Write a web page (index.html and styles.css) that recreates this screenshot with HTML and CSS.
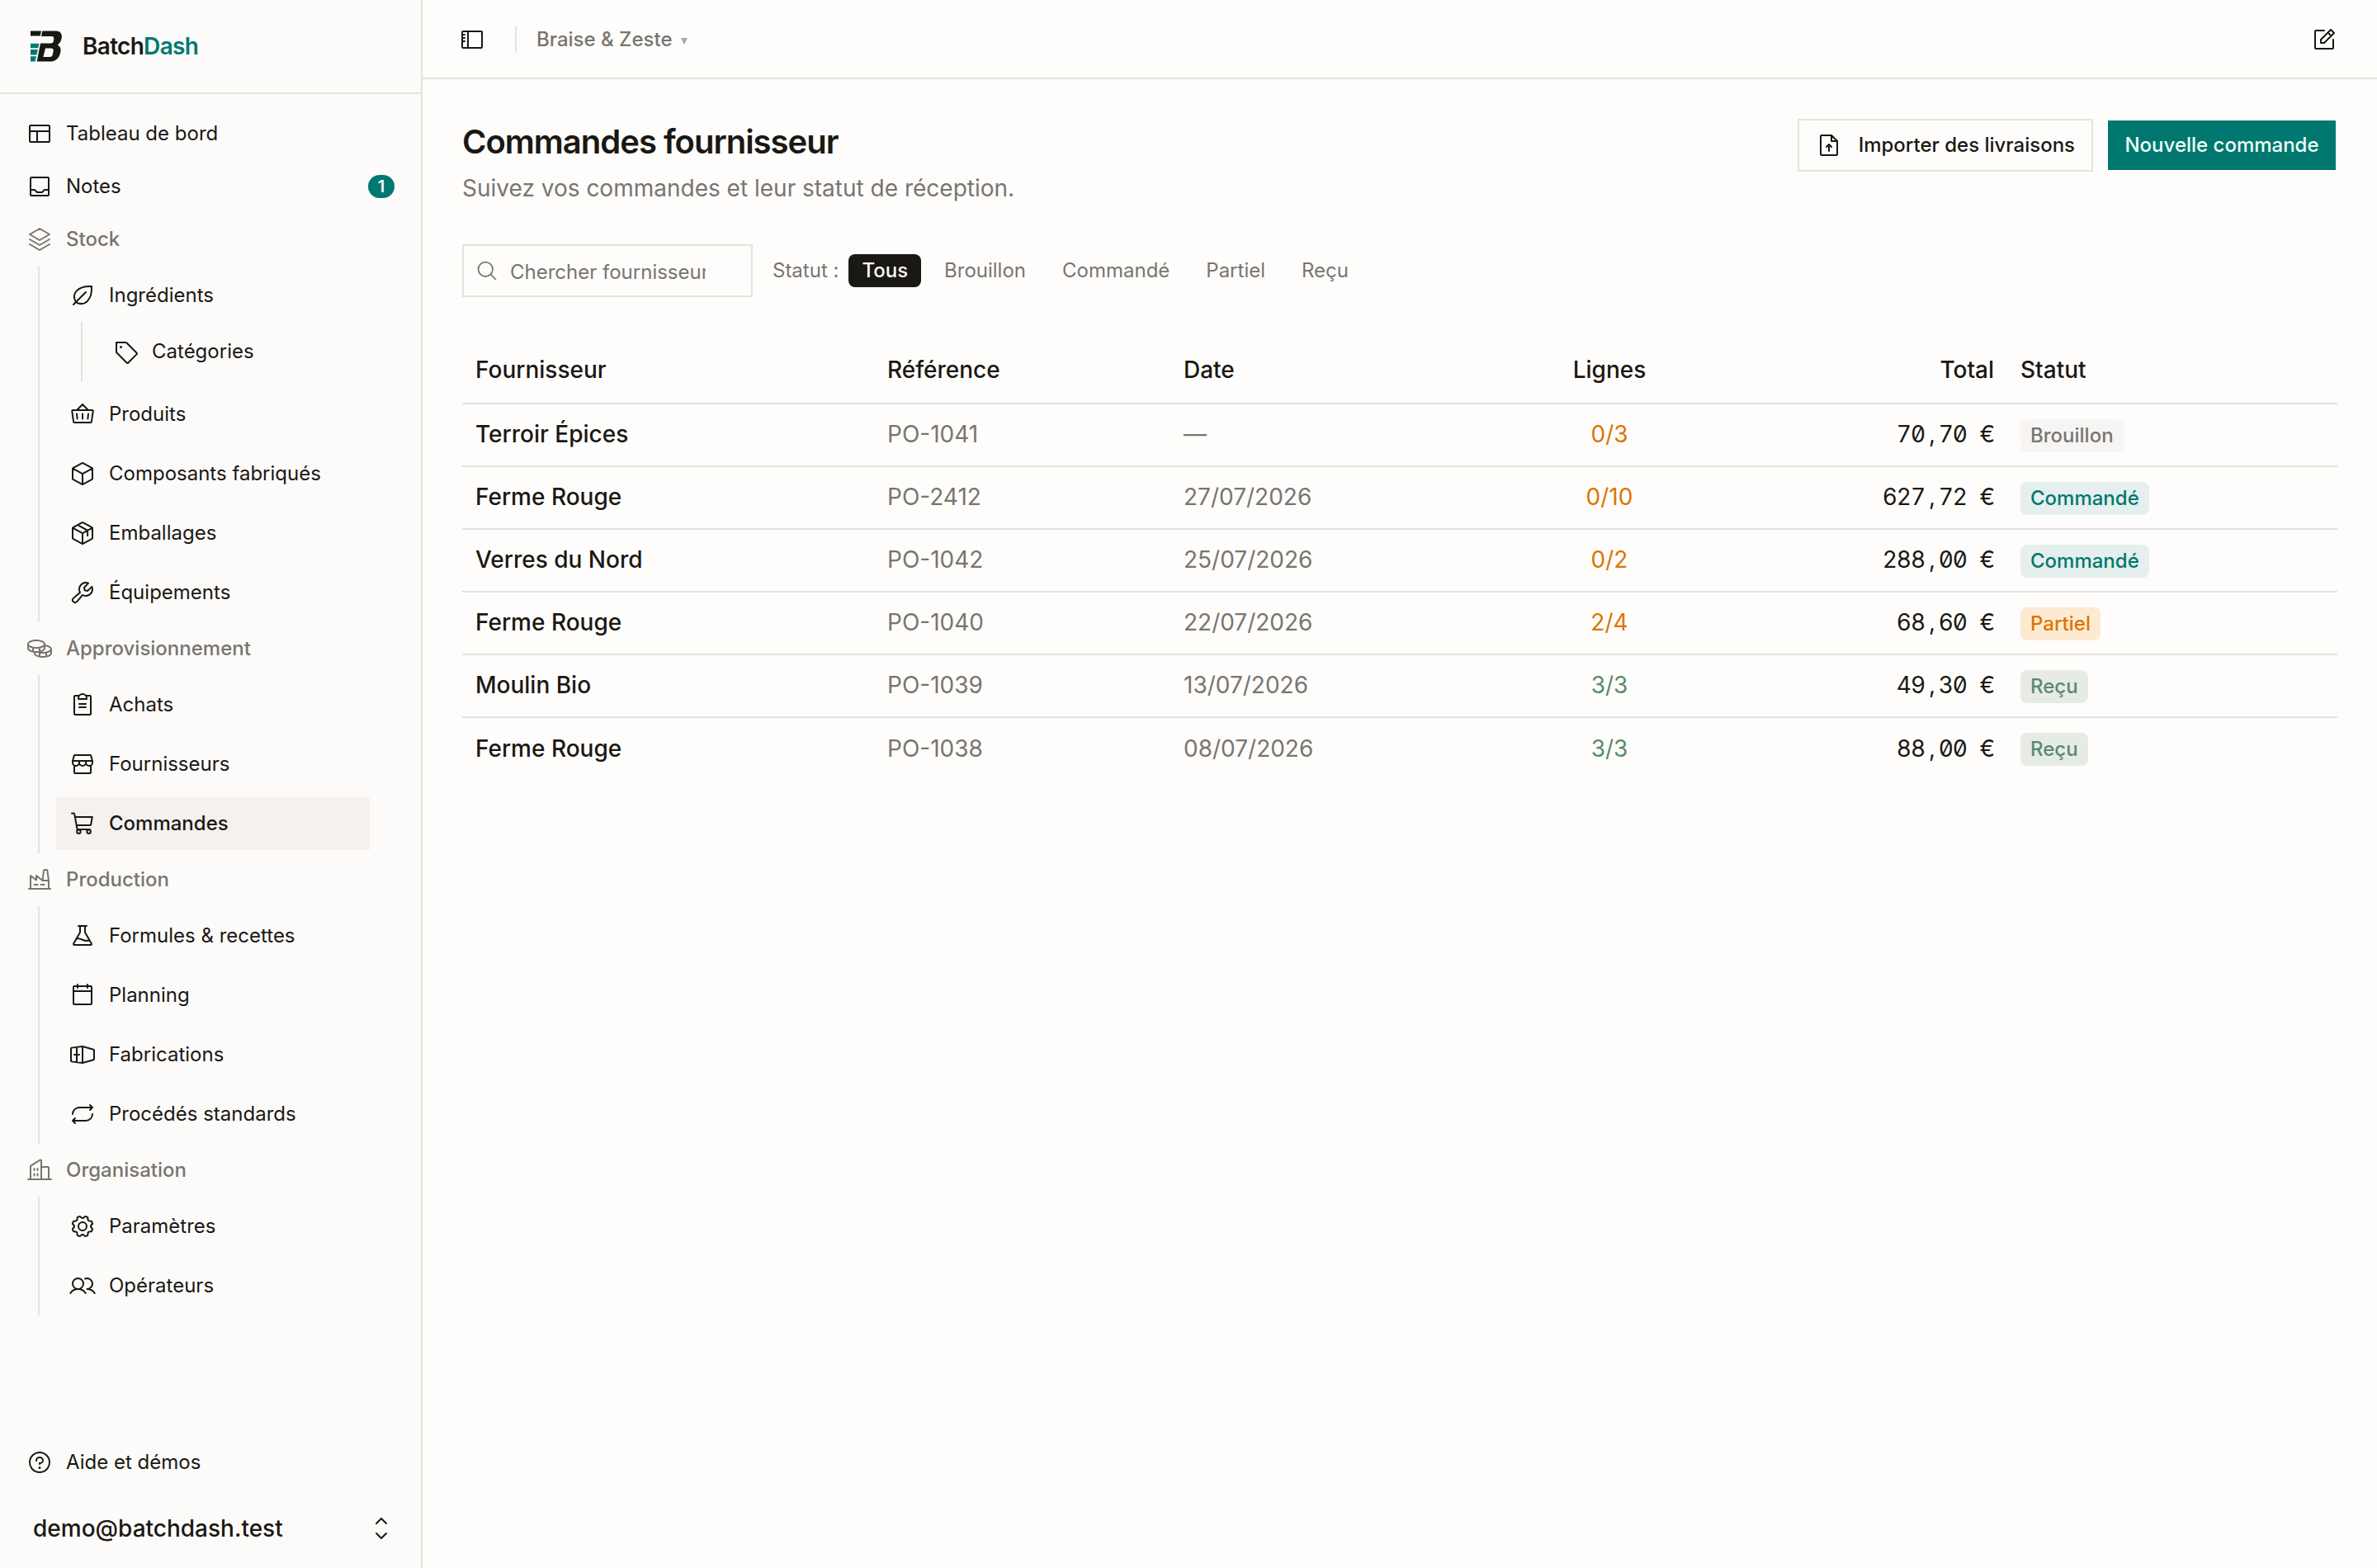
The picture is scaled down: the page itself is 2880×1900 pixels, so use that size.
FILE: index.html
```html
<!DOCTYPE html>
<html lang="fr">
<head>
    <meta charset="utf-8">
    <title>Commandes fournisseur - BatchDash</title>
    <link rel="stylesheet" href="styles.css">
</head>
<body>
    <aside class="sidebar">
        <div class="brand">
            <svg class="logo" viewBox="0 0 38 38">
                <path d="M0 .5h13l-1.3 6H0z"/>
                <path fill-rule="evenodd" d="M14.3.4H31c5 0 7.4 3.6 6.8 8-.5 4.1-2.3 7.1-5.1 9 3.3 1.6 4.3 4.6 3.6 8.6C35.2 33 30.5 37.6 24 37.6H7.7L12 15.6h12.5c2 0 3.2-1 3.5-3l.2-2.5c.2-2-.7-3.1-2.6-3.1H13zM18 21.5L15.4 32h8c2 0 3-1 3.4-3l.8-4c.4-2-.4-3.5-2.4-3.5z"/>
                <path class="logo-accent" d="M0 15.700h10.400l-1.200 5.600H0zM0 23h8.800l-1.300 6.400H0zM0 31.200h7l-1.400 6.400H0z"/>
            </svg>
            <span class="brand-name">Batch<span>Dash</span></span>
        </div>

        <nav class="nav">
            <a class="nav-item">
                <svg class="icon" viewBox="0 0 256 256"><rect x="32" y="48" width="192" height="160" rx="8"/><path d="M104 104v104M32 104h192"/></svg>
                Tableau de bord
            </a>
            <a class="nav-item">
                <svg class="icon" viewBox="0 0 256 256"><rect x="40" y="40" width="176" height="176" rx="8"/><path d="M40 160h36.700a8 8 0 0 1 5.600 2.300l19.400 19.400a8 8 0 0 0 5.600 2.300h41.400a8 8 0 0 0 5.600-2.300l19.400-19.400a8 8 0 0 1 5.600-2.300H216"/></svg>
                Notes
                <span class="count">1</span>
            </a>

            <div class="nav-section">
                <svg class="icon" viewBox="0 0 256 256"><path d="M32 176l96 56 96-56M32 128l96 56 96-56M32 80l96 56 96-56-96-56z"/></svg>
                Stock
            </div>
            <ul class="tree">
                <li>
                    <a class="nav-item">
                        <svg class="icon" viewBox="0 0 256 256"><path d="M63.810 192.190c-47.890-79.810 16-159.620 151.640-151.640C223.430 176.230 143.620 240.080 63.810 192.190zM160 96L40 216"/></svg>
                        Ingrédients
                    </a>
                    <ul class="tree">
                        <li>
                            <a class="nav-item">
                                <svg class="icon" viewBox="0 0 256 256"><path d="M42.340 138.340A8 8 0 0 1 40 132.690V40h92.690a8 8 0 0 1 5.650 2.340l99.320 99.320a8 8 0 0 1 0 11.310L153 237.660a8 8 0 0 1-11.310 0z"/><circle class="dot" cx="84" cy="84" r="12"/></svg>
                                Catégories
                            </a>
                        </li>
                    </ul>
                </li>
                <li>
                    <a class="nav-item">
                        <svg class="icon" viewBox="0 0 256 256"><path d="M34.100 88h187.800a8 8 0 0 1 7.900 9.100l-14.500 104a8 8 0 0 1-7.900 6.900H48.600a8 8 0 0 1-7.900-6.900l-14.500-104A8 8 0 0 1 34.100 88zM73.100 88L128 32l54.900 56M128 124v48M184 124l-5 48M72 124l5 48"/></svg>
                        Produits
                    </a>
                </li>
                <li>
                    <a class="nav-item">
                        <svg class="icon" viewBox="0 0 256 256"><path d="M219.840 182.840l-88 48.180a8 8 0 0 1-7.680 0l-88-48.180a8 8 0 0 1-4.160-7V80.180a8 8 0 0 1 4.160-7l88-48.180a8 8 0 0 1 7.680 0l88 48.180a8 8 0 0 1 4.160 7v95.640a8 8 0 0 1-4.160 7.020zM32.700 76.920L128 129.080l95.300-52.160M128 129.080V232"/></svg>
                        Composants fabriqués
                    </a>
                </li>
                <li>
                    <a class="nav-item">
                        <svg class="icon" viewBox="0 0 256 256"><path d="M219.840 182.840l-88 48.180a8 8 0 0 1-7.680 0l-88-48.180a8 8 0 0 1-4.160-7V80.180a8 8 0 0 1 4.160-7l88-48.180a8 8 0 0 1 7.680 0l88 48.180a8 8 0 0 1 4.160 7v95.640a8 8 0 0 1-4.160 7.020zM32.700 76.920L128 129.080l95.300-52.160M128 129.080V232M177 152v-50L81 49.600"/></svg>
                        Emballages
                    </a>
                </li>
                <li>
                    <a class="nav-item">
                        <svg class="icon solid" viewBox="0 0 256 256"><path d="M226.760,69a8,8,0,0,0-12.840-2.880l-40.300,37.190-17.230-3.700-3.700-17.230,37.190-40.300A8,8,0,0,0,187,29.240,72,72,0,0,0,88,96,72.340,72.340,0,0,0,94,124.940L33.790,177c-.15.12-.29.26-.43.39a32,32,0,0,0,45.260,45.260c.13-.13.27-.28.39-.42L131.060,162A72,72,0,0,0,232,96,71.560,71.560,0,0,0,226.760,69ZM160,152a56.140,56.140,0,0,1-27.070-7,8,8,0,0,0-9.920,1.770L67.110,211.510a16,16,0,0,1-22.620-22.620L109.180,133a8,8,0,0,0,1.770-9.930,56,56,0,0,1,58.360-82.310l-31.200,33.810a8,8,0,0,0-1.940,7.100L141.830,108a8,8,0,0,0,6.140,6.140l26.350,5.660a8,8,0,0,0,7.100-1.940l33.810-31.200A56.060,56.060,0,0,1,160,152Z"/></svg>
                        Équipements
                    </a>
                </li>
            </ul>

            <div class="nav-section">
                <svg class="icon solid" viewBox="0 0 256 256"><path d="M184,89.570V84c0-25.080-37.830-44-88-44S8,58.920,8,84v40c0,20.890,26.250,37.490,64,42.460V172c0,25.080,37.830,44,88,44s88-18.920,88-44V132C248,111.300,222.580,94.680,184,89.570ZM232,132c0,13.220-30.790,28-72,28-3.730,0-7.430-.13-11.080-.37C170.490,151.770,184,139,184,124V105.740C213.870,110.190,232,122.270,232,132ZM72,150.250V126.460A183.740,183.740,0,0,0,96,128a183.740,183.740,0,0,0,24-1.540v23.790A163,163,0,0,1,96,152,163,163,0,0,1,72,150.250Zm96-40.320V124c0,8.390-12.410,17.400-32,22.870V123.500C148.910,120.370,159.840,115.710,168,109.930ZM96,56c41.210,0,72,14.780,72,28s-30.790,28-72,28S24,97.220,24,84,54.790,56,96,56ZM24,124V109.930c8.160,5.780,19.090,10.440,32,13.570v23.370C36.410,141.400,24,132.390,24,124Zm64,48v-4.170c2.630.1,5.290.17,8,.17,3.880,0,7.670-.13,11.390-.35A121.920,121.920,0,0,0,120,171.410v23.460C100.410,189.400,88,180.390,88,172Zm48,26.250V174.400a179.480,179.480,0,0,0,24,1.600,183.740,183.740,0,0,0,24-1.540v23.790a165.450,165.450,0,0,1-48,0Zm64-3.380V171.500c12.910-3.130,23.840-7.790,32-13.570V172C232,180.390,219.590,189.400,200,194.870Z"/></svg>
                Approvisionnement
            </div>
            <ul class="tree">
                <li>
                    <a class="nav-item">
                        <svg class="icon" viewBox="0 0 256 256"><path d="M96 152h64M96 120h64M160 40h40a8 8 0 0 1 8 8v168a8 8 0 0 1-8 8H56a8 8 0 0 1-8-8V48a8 8 0 0 1 8-8h40M88 72v-8a40 40 0 0 1 80 0v8z"/></svg>
                        Achats
                    </a>
                </li>
                <li>
                    <a class="nav-item">
                        <svg class="icon" viewBox="0 0 256 256"><path d="M48 139.600V208a8 8 0 0 0 8 8h144a8 8 0 0 0 8-8v-68.400M54 40h148a8 8 0 0 1 7.700 5.800L224 96H32l14.300-50.200A8 8 0 0 1 54 40zM96 96v16a32 32 0 0 1-64 0V96M160 96v16a32 32 0 0 1-64 0V96M224 96v16a32 32 0 0 1-64 0V96"/></svg>
                        Fournisseurs
                    </a>
                </li>
                <li>
                    <a class="nav-item active">
                        <svg class="icon" viewBox="0 0 256 256"><circle cx="91" cy="206" r="18"/><circle cx="189" cy="206" r="18"/><path d="M24 28h18a8 8 0 0 1 7.900 6.800L77 184h122M56 64h166l-12.500 73.300a8 8 0 0 1-7.900 6.700H70"/></svg>
                        Commandes
                    </a>
                </li>
            </ul>

            <div class="nav-section">
                <svg class="icon" viewBox="0 0 256 256"><path d="M24 216h208M40 216V88l56 44V88l61 48h59M157 134l11-95a8 8 0 0 1 8-7h19a8 8 0 0 1 8 7l13 97v80M76 176h32M140 176h32"/></svg>
                Production
            </div>
            <ul class="tree">
                <li>
                    <a class="nav-item">
                        <svg class="icon" viewBox="0 0 256 256"><path d="M88 32h80M104 32v61.800L41.200 203.900A8 8 0 0 0 48 216h160a8 8 0 0 0 6.900-12.100L152 93.800V32M68 156c18-4 38-2 60 10 22 10 42 12 62 6"/></svg>
                        Formules &amp; recettes
                    </a>
                </li>
                <li>
                    <a class="nav-item">
                        <svg class="icon" viewBox="0 0 256 256"><rect x="40" y="40" width="176" height="176" rx="8"/><path d="M176 24v32M80 24v32M40 88h176"/></svg>
                        Planning
                    </a>
                </li>
                <li>
                    <a class="nav-item">
                        <svg class="icon" viewBox="0 0 256 256"><path d="M23 61l105-13 106 30a8 8 0 0 1 6 8v84a8 8 0 0 1-6 8l-106 30-105-13a8 8 0 0 1-7-8V69a8 8 0 0 1 7-8zM128 48v160M72 55v146M48 128h48"/></svg>
                        Fabrications
                    </a>
                </li>
                <li>
                    <a class="nav-item">
                        <svg class="icon" viewBox="0 0 256 256"><path d="M32 128a64 64 0 0 1 64-64h128M200 40l24 24-24 24M224 128a64 64 0 0 1-64 64H32M56 168l-24 24 24 24"/></svg>
                        Procédés standards
                    </a>
                </li>
            </ul>

            <div class="nav-section">
                <svg class="icon" viewBox="0 0 256 256"><path d="M16 216h224M40 216V92a8 8 0 0 1 3.600-6.700l88-56A8 8 0 0 1 144 36v180M144 96h64a8 8 0 0 1 8 8v112M76 112v16M108 112v16M76 164v16M108 164v16"/></svg>
                Organisation
            </div>
            <ul class="tree">
                <li>
                    <a class="nav-item">
                        <svg class="icon solid" viewBox="0 0 256 256"><path d="M128,80a48,48,0,1,0,48,48A48.050,48.050,0,0,0,128,80Zm0,80a32,32,0,1,1,32-32A32,32,0,0,1,128,160Zm88-29.840q.06-2.160,0-4.320l14.920-18.640a8,8,0,0,0,1.480-7.060,107.210,107.210,0,0,0-10.880-26.250,8,8,0,0,0-6-3.930l-23.720-2.640q-1.480-1.560-3-3L186,40.540a8,8,0,0,0-3.940-6,107.710,107.710,0,0,0-26.250-10.870,8,8,0,0,0-7.060,1.490L130.160,40Q128,40,125.840,40L107.200,25.110a8,8,0,0,0-7.060-1.480A107.600,107.600,0,0,0,73.890,34.510a8,8,0,0,0-3.930,6L67.320,64.270q-1.560,1.490-3,3L40.540,70a8,8,0,0,0-6,3.940,107.710,107.710,0,0,0-10.870,26.250,8,8,0,0,0,1.490,7.060L40,125.840Q40,128,40,130.160L25.110,148.800a8,8,0,0,0-1.480,7.060,107.210,107.210,0,0,0,10.880,26.250,8,8,0,0,0,6,3.930l23.720,2.640q1.490,1.560,3,3L70,215.460a8,8,0,0,0,3.940,6,107.710,107.710,0,0,0,26.250,10.870,8,8,0,0,0,7.060-1.490L125.840,216q2.160.06,4.320,0l18.640,14.920a8,8,0,0,0,7.060,1.480,107.210,107.210,0,0,0,26.250-10.880,8,8,0,0,0,3.930-6l2.640-23.720q1.560-1.480,3-3L215.460,186a8,8,0,0,0,6-3.940,107.710,107.710,0,0,0,10.870-26.250,8,8,0,0,0-1.490-7.060Zm-16.100-6.500a73.930,73.930,0,0,1,0,8.680,8,8,0,0,0,1.740,5.480l14.190,17.730a91.570,91.570,0,0,1-6.230,15L187,173.110a8,8,0,0,0-5.100,2.640,74.110,74.110,0,0,1-6.140,6.140,8,8,0,0,0-2.640,5.100l-2.510,22.580a91.320,91.320,0,0,1-15,6.230l-17.740-14.190a8,8,0,0,0-5-1.750h-.48a73.930,73.930,0,0,1-8.680,0,8,8,0,0,0-5.480,1.740L100.450,215.800a91.570,91.570,0,0,1-15-6.230L82.890,187a8,8,0,0,0-2.640-5.100,74.110,74.110,0,0,1-6.140-6.140,8,8,0,0,0-5.100-2.640L46.430,170.600a91.320,91.320,0,0,1-6.230-15l14.190-17.740a8,8,0,0,0,1.740-5.480,73.930,73.930,0,0,1,0-8.680,8,8,0,0,0-1.740-5.480L40.200,100.450a91.570,91.570,0,0,1,6.230-15L69,82.890a8,8,0,0,0,5.100-2.640,74.110,74.110,0,0,1,6.140-6.140A8,8,0,0,0,82.890,69L85.400,46.430a91.320,91.320,0,0,1,15-6.230l17.740,14.190a8,8,0,0,0,5.480,1.740,73.930,73.930,0,0,1,8.680,0,8,8,0,0,0,5.480-1.740L155.550,40.200a91.570,91.570,0,0,1,15,6.230L173.110,69a8,8,0,0,0,2.640,5.100,74.110,74.110,0,0,1,6.140,6.140,8,8,0,0,0,5.100,2.640l22.580,2.510a91.320,91.320,0,0,1,6.230,15l-14.190,17.740A8,8,0,0,0,199.870,123.660Z"/></svg>
                        Paramètres
                    </a>
                </li>
                <li>
                    <a class="nav-item">
                        <svg class="icon" viewBox="0 0 256 256"><circle cx="84" cy="108" r="52"/><path d="M10.230 200a88 88 0 0 1 147.540 0M172 160a87.930 87.930 0 0 1 73.770 40M152.690 59.700A52 52 0 1 1 172 160"/></svg>
                        Opérateurs
                    </a>
                </li>
            </ul>
        </nav>

        <div class="sidebar-footer">
            <a class="nav-item">
                <svg class="icon" viewBox="0 0 256 256"><circle cx="128" cy="128" r="96"/><circle class="dot" cx="128" cy="180" r="12"/><path d="M128 144v-8c17.670 0 32-12.540 32-28s-14.330-28-32-28-32 12.540-32 28v4"/></svg>
                Aide et démos
            </a>
            <div class="account">
                <span>demo@batchdash.test</span>
                <svg class="icon" viewBox="0 0 256 256"><path d="M80 176l48 48 48-48M80 80l48-48 48 48"/></svg>
            </div>
        </div>
    </aside>

    <div class="content">
        <header class="topbar">
            <svg class="icon" viewBox="0 0 256 256"><rect x="32" y="48" width="192" height="160" rx="8"/><path d="M88 48v160M36 80h20M36 112h20M36 144h20"/></svg>
            <span class="divider"></span>
            <span class="workspace">Braise &amp; Zeste</span>
            <svg class="caret" viewBox="0 0 8 8"><path d="M0 0h8L4 8z"/></svg>
            <svg class="icon edit" viewBox="0 0 256 256"><path d="M216 128v80a8 8 0 0 1-8 8H48a8 8 0 0 1-8-8V48a8 8 0 0 1 8-8h80M128 160H96v-32l96-96 32 32zM164 60l32 32"/></svg>
        </header>

        <main>
            <div class="page-header">
                <div>
                    <h1>Commandes fournisseur</h1>
                    <p>Suivez vos commandes et leur statut de réception.</p>
                </div>
                <div class="actions">
                    <button class="btn btn-outline">
                        <svg class="icon" viewBox="0 0 256 256"><path d="M200 224H56a8 8 0 0 1-8-8V40a8 8 0 0 1 8-8h96l56 56v128a8 8 0 0 1-8 8zM152 32v56h56M104 144l24-24 24 24M128 184v-64"/></svg>
                        <span>Importer des livraisons</span>
                    </button>
                    <button class="btn btn-primary"><span>Nouvelle commande</span></button>
                </div>
            </div>

            <div class="filters">
                <div class="search">
                    <svg class="icon" viewBox="0 0 256 256"><circle cx="112" cy="112" r="80"/><path d="M168.570 168.570L224 224"/></svg>
                    <input type="text" placeholder="Chercher fournisseur ou référence">
                </div>
                <span class="filter-label">Statut :</span>
                <button class="pill selected">Tous</button>
                <button class="pill">Brouillon</button>
                <button class="pill">Commandé</button>
                <button class="pill">Partiel</button>
                <button class="pill">Reçu</button>
            </div>

            <table>
                <colgroup>
                    <col class="col-supplier">
                    <col class="col-ref">
                    <col class="col-date">
                    <col class="col-lines">
                    <col class="col-total">
                    <col class="col-status">
                </colgroup>
                <thead>
                    <tr>
                        <th>Fournisseur</th>
                        <th>Référence</th>
                        <th>Date</th>
                        <th class="lines">Lignes</th>
                        <th class="total">Total</th>
                        <th>Statut</th>
                    </tr>
                </thead>
                <tbody>
                    <tr>
                        <td class="supplier">Terroir Épices</td>
                        <td>PO-1041</td>
                        <td>—</td>
                        <td class="lines pending">0/3</td>
                        <td class="total amount">70<i>,</i>70 €</td>
                        <td class="status"><span class="badge draft">Brouillon</span></td>
                    </tr>
                    <tr>
                        <td class="supplier">Ferme Rouge</td>
                        <td>PO-2412</td>
                        <td>27/07/2026</td>
                        <td class="lines pending">0/10</td>
                        <td class="total amount">627<i>,</i>72 €</td>
                        <td class="status"><span class="badge ordered">Commandé</span></td>
                    </tr>
                    <tr>
                        <td class="supplier">Verres du Nord</td>
                        <td>PO-1042</td>
                        <td>25/07/2026</td>
                        <td class="lines pending">0/2</td>
                        <td class="total amount">288<i>,</i>00 €</td>
                        <td class="status"><span class="badge ordered">Commandé</span></td>
                    </tr>
                    <tr>
                        <td class="supplier">Ferme Rouge</td>
                        <td>PO-1040</td>
                        <td>22/07/2026</td>
                        <td class="lines pending">2/4</td>
                        <td class="total amount">68<i>,</i>60 €</td>
                        <td class="status"><span class="badge partial">Partiel</span></td>
                    </tr>
                    <tr>
                        <td class="supplier">Moulin Bio</td>
                        <td>PO-1039</td>
                        <td>13/07/2026</td>
                        <td class="lines done">3/3</td>
                        <td class="total amount">49<i>,</i>30 €</td>
                        <td class="status"><span class="badge received">Reçu</span></td>
                    </tr>
                    <tr>
                        <td class="supplier">Ferme Rouge</td>
                        <td>PO-1038</td>
                        <td>08/07/2026</td>
                        <td class="lines done">3/3</td>
                        <td class="total amount">88<i>,</i>00 €</td>
                        <td class="status"><span class="badge received">Reçu</span></td>
                    </tr>
                </tbody>
            </table>
        </main>
    </div>
</body>
</html>
```
FILE: styles.css
```css
* {
    box-sizing: border-box;
}
body {
    display: flex;
    height: 1900px;
    margin: 0;
    background: #fefdfb;
    color: #1a1814;
    font-family: Inter, sans-serif;
    font-size: 28px;
    line-height: 40px;
}
ul {
    margin: 0;
    padding: 0;
    list-style: none;
}
button, input {
    font-family: inherit;
    margin: 0;
}

/* icons */
.icon {
    width: 32px;
    height: 32px;
    flex-shrink: 0;
    fill: none;
    stroke: currentColor;
    stroke-width: 16;
    stroke-linecap: round;
    stroke-linejoin: round;
}
.icon.solid, .icon .dot {
    fill: currentColor;
    stroke: none;
}

/* sidebar */
.sidebar {
    display: flex;
    flex-direction: column;
    flex-shrink: 0;
    width: 512px;
    border-right: 2px solid #e3e2df;
    background: #fcfbf9;
}
.brand {
    display: flex;
    align-items: center;
    gap: 25px;
    height: 114px;
    padding-left: 37px;
    border-bottom: 2px solid #e5e3df;
}
.logo {
    width: 38px;
    height: 38px;
    fill: #1a1814;
}
.logo-accent {
    fill: #00786f;
}
.brand-name {
    font-weight: 600;
    letter-spacing: -0.025em;
}
.brand-name span {
    color: #00786f;
}
.nav {
    flex: 1;
    padding: 16px;
}
.nav-item, .nav-section {
    display: flex;
    align-items: center;
    gap: 16px;
    height: 64px;
    padding: 0 16px;
    font-size: 24px;
    line-height: 32px;
}
.nav-section {
    color: #78756f;
    font-weight: 500;
}
.nav-item.active {
    background: #f5f1ef;
    font-weight: 500;
}
.count {
    display: flex;
    align-items: center;
    justify-content: center;
    width: 32px;
    height: 28px;
    margin-left: auto;
    border-radius: 14px;
    background: #00786f;
    color: #f0fdfa;
    font-size: 20px;
    font-weight: 600;
}
.tree {
    margin-left: 30px;
    border-left: 2px solid #e3e2df;
    padding-left: 20px;
}
.tree li {
    padding: 4px 0;
}
.nav > .tree {
    padding-right: 46px;
}
.sidebar-footer .nav-item {
    margin: 0 16px;
}
.account {
    display: flex;
    align-items: center;
    justify-content: space-between;
    height: 96px;
    padding: 0 32px 0 40px;
    font-weight: 500;
}

/* top bar */
.content {
    flex: 1;
}
.topbar {
    display: flex;
    align-items: center;
    height: 96px;
    padding: 0 48px 0 44px;
    border-bottom: 2px solid #e3e2df;
}
.topbar .icon {
    margin-top: 2px;
}
.divider {
    width: 2px;
    height: 32px;
    margin: 2px 24px 0 36px;
    background: #e3e2df;
}
.workspace {
    padding-top: 2px;
    color: #78756f;
    font-size: 24px;
    font-weight: 500;
}
.caret {
    width: 8px;
    height: 8px;
    margin: 6px 0 0 10px;
    fill: #a8a6a2;
}
.edit {
    margin-left: auto;
}

/* page */
main {
    padding: 48px;
}
.page-header {
    display: flex;
    align-items: flex-start;
    justify-content: space-between;
}
h1 {
    margin: 0 0 8px;
    font-size: 40px;
    font-weight: 600;
    line-height: 56px;
    letter-spacing: -0.025em;
}
.page-header p {
    margin: 0;
    color: #78756f;
}
.actions {
    display: flex;
    gap: 16px;
}
.btn {
    display: flex;
    align-items: center;
    justify-content: center;
    gap: 20px;
    height: 64px;
    padding: 0 20px;
    border: 2px solid transparent;
    background: none;
    background-clip: padding-box;
    color: #1a1814;
    font-size: 24px;
    font-weight: 500;
}
.btn span {
    padding-bottom: 2px;
}
.btn-outline {
    border-color: #e3e2df;
}
.btn-primary {
    width: 280px;
    background-color: #00786f;
    color: #f0fdfa;
}
.filters {
    display: flex;
    align-items: center;
    gap: 12px;
    margin: 48px 0;
    color: #78756f;
    font-size: 24px;
}
.search {
    display: flex;
    align-items: center;
    gap: 14px;
    width: 352px;
    height: 64px;
    margin-right: 12px;
    padding: 0 54px 0 14px;
    border: 2px solid #e3e2df;
}
.search .icon {
    width: 28px;
    height: 28px;
}
.search input {
    width: 237px;
    padding: 2px 0 0;
    border: none;
    outline: none;
    background: none;
    font-size: 24px;
}
.search input::placeholder {
    color: #78756f;
}
.filter-label {
    padding-bottom: 1px;
}
.pill {
    height: 40px;
    padding: 0 16px 2px;
    border: none;
    border-radius: 8px;
    background: none;
    color: #78756f;
    font-size: 24px;
}
.pill.selected {
    background: #1a1814;
    color: #fefdfb;
    font-weight: 500;
}

/* orders table */
table {
    width: 2272px;
    table-layout: fixed;
    border-spacing: 0;
}
.col-supplier { width: 499px; }
.col-ref { width: 359px; }
.col-date { width: 382px; }
.col-lines { width: 300px; }
.col-total { width: 332px; }
.col-status { width: 400px; }
th, td {
    height: 76px;
    padding: 0 16px;
    border-bottom: 2px solid #e3e2df;
    text-align: left;
    vertical-align: middle;
}
th {
    height: 82px;
    font-weight: 500;
}
td {
    padding-bottom: 2px;
    color: #78756f;
}
tr:last-child td {
    border-bottom: none;
}
.supplier {
    color: #1a1814;
    font-weight: 500;
}
.lines {
    text-align: center;
}
.pending {
    color: #dd7400;
}
.done {
    color: #5a8a6c;
}
.total {
    text-align: right;
}
/* fixed-pitch figures: every character takes 0.6em */
.amount {
    color: #1a1814;
    font-feature-settings: "tnum", "zero";
    letter-spacing: -0.04em;
    word-spacing: 0.33em;
}
.amount i {
    display: inline-block;
    width: 0.6em;
    font-style: normal;
    text-align: center;
}
.status {
    padding-top: 2px;
    padding-bottom: 0;
}
tr:last-child .status {
    padding-bottom: 2px;
}
.badge {
    display: block;
    width: fit-content;
    height: 40px;
    padding: 0 12px;
    border-radius: 8px;
    font-size: 24px;
    font-weight: 500;
}
.draft {
    background: #f6f5f4;
    color: #78756f;
}
.ordered {
    background: #e5efed;
    color: #00786f;
}
.partial {
    background: #fdead2;
    color: #dd7400;
}
.received {
    background: #e6ebe6;
    color: #5a8a6c;
}
```
